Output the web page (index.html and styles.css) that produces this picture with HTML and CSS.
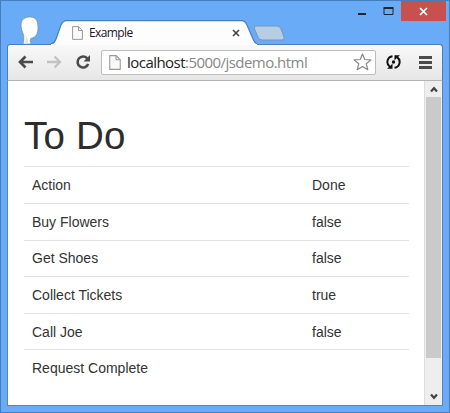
FILE: index.html
```html
<!DOCTYPE html>
<html lang="en">
<head>
<meta charset="utf-8">
<title>Example</title>
<link rel="stylesheet" href="styles.css">
</head>
<body>
<div class="window">
  <header class="titlebar">
    <svg class="avatar" width="20" height="28" viewBox="0 0 20 28"><path d="M3 28C4 24 4.500 20 2.500 16C.5 11 0 4 5 2C9 .3 15 .3 17 5C18.500 10 18.500 17 15.500 20C14 22 11 21.500 10.500 23C10 25 10.500 26 11 28Z" fill="#fff" stroke="#72828d" stroke-width=".6"/><path d="M4 18C7 20 6 24 4 28H7C9 24 8 21 4 18Z" fill="#dce5e9"/></svg>
    <div class="tab">
      <svg class="tab-shape" width="206" height="25" viewBox="0 0 206 25"><path d="M0 24C3 24 4 22 5 19L10 5Q12 1 15 1H191Q194 1 196 5L202 19Q204 24 206 24V25H0Z" fill="#fdfdfd"/><path d="M0 23.500C3 23.500 4 22 5 19L10 5Q12 .7 15 .7H191Q194 .7 196 5L202 19Q204 23.500 206 23.500" fill="none" stroke="#477fbd" stroke-width="1.200"/></svg>
      <svg class="page-icon" width="11" height="14" viewBox="0 0 11 14"><path d="M.6.6H6.500L10.400 4.500V13.400H.6Z" fill="#fafafa" stroke="#999"/><path d="M6.500.6V4.500H10.400" fill="none" stroke="#999"/></svg>
      <span class="tab-title">Example</span>
      <svg class="tab-close" width="8" height="8" viewBox="0 0 8 8"><path d="M1 1L7 7M7 1L1 7" stroke="#444" stroke-width="1.600"/></svg>
    </div>
    <svg class="new-tab" width="32" height="16" viewBox="0 0 32 16"><path d="M3 1H24Q27 1 28 4L31 12Q32 15 29 15H9Q6 15 5 12L1.500 4Q.5 1 3 1Z" fill="#b6cde3" stroke="#6b99ca"/></svg>
    <div class="controls">
      <svg class="minmax" width="40" height="20" viewBox="0 0 40 20"><path d="M4 14H12" stroke="#1d2633" stroke-width="2"/><path d="M30 8.500H39V14.500H30Z" fill="none" stroke="#1d2633"/><path d="M29.500 8H39.500" stroke="#1d2633" stroke-width="2"/></svg>
      <div class="close"><svg width="9" height="9" viewBox="0 0 9 9"><path d="M1 1L8 8M8 1L1 8" stroke="#fff" stroke-width="1.700"/></svg></div>
    </div>
  </header>
  <nav class="toolbar">
    <svg class="back" width="16" height="14" viewBox="0 0 16 14"><path d="M7.500 1.500L2 7L7.500 12.500M2 7H15" fill="none" stroke="#4b4b4b" stroke-width="2.700"/></svg>
    <svg class="forward" width="16" height="14" viewBox="0 0 16 14"><path d="M8.500 1.500L14 7L8.500 12.500M14 7H1" fill="none" stroke="#c2c2c2" stroke-width="2.300"/></svg>
    <svg class="reload" width="16" height="16" viewBox="0 0 16 16"><path d="M12.200 4.300A5.500 5.500 0 1 0 13.200 10" fill="none" stroke="#4b4b4b" stroke-width="2.600"/><path d="M15 1V7.500H8.500Z" fill="#4b4b4b"/></svg>
    <div class="address">
      <svg class="page-icon" width="12" height="15" viewBox="0 0 11 14"><path d="M.6.6H6.500L10.400 4.500V13.400H.6Z" fill="#fafafa" stroke="#999"/><path d="M6.500.6V4.500H10.400" fill="none" stroke="#999"/></svg>
      <span class="url"><b>localhost</b>:5000/jsdemo.html</span>
      <svg class="star" width="19" height="18" viewBox="0 0 19 18"><path d="M9.500 1L11.800 6.500L18 6.900L13.200 10.700L14.800 16.700L9.500 13.400L4.200 16.700L5.800 10.700L1 6.900L7.200 6.500Z" fill="#fff" stroke="#888" stroke-width="1.200" stroke-linejoin="round"/></svg>
    </div>
    <svg class="sync" width="15" height="16" viewBox="0 0 15 16"><g fill="none" stroke="#111" stroke-width="2"><path d="M6.500 2.200A5.800 5.800 0 0 0 4 12.800M8.500 13.800A5.800 5.800 0 0 0 11 3.200"/></g><path d="M1 14.700H6.500V9.500L4.700 11.500ZM14 1.300H8.500V6.500L10.300 4.500Z" fill="#111"/><circle cx="7.500" cy="8" r="1.700" fill="#111"/></svg>
    <svg class="menu" width="13" height="13" viewBox="0 0 13 13"><path d="M0 1.500H13M0 6.500H13M0 11.500H13" stroke="#4b4b4b" stroke-width="2.800"/></svg>
  </nav>
  <div class="viewport">
    <main class="page">
      <h1>To Do</h1>
      <table>
        <tbody>
          <tr><td>Action</td><td>Done</td></tr>
          <tr><td>Buy Flowers</td><td>false</td></tr>
          <tr><td>Get Shoes</td><td>false</td></tr>
          <tr><td>Collect Tickets</td><td>true</td></tr>
          <tr><td>Call Joe</td><td>false</td></tr>
          <tr><td colspan="2">Request Complete</td></tr>
        </tbody>
      </table>
    </main>
    <div class="scrollbar">
      <svg width="8" height="7" viewBox="0 0 8 7"><path d="M1 5.500L4 2.200L7 5.500" fill="none" stroke="#444" stroke-width="2.200"/></svg>
      <div class="thumb"></div>
      <svg class="down" width="8" height="7" viewBox="0 0 8 7"><path d="M1 1.500L4 4.800L7 1.500" fill="none" stroke="#444" stroke-width="2.200"/></svg>
    </div>
  </div>
</div>
</body>
</html>
```

FILE: styles.css
```css
* { box-sizing: border-box; }
body { margin: 0; overflow: hidden; }
svg { display: block; flex: none; }

.window {
  width: 450px;
  height: 413px;
  padding: 0 6px 6px;
  display: flex;
  flex-direction: column;
  background: #6aabf7;
  border: 1px solid #467dbd;
  font-family: "Liberation Sans", Arial, sans-serif;
}

.titlebar {
  height: 43px;
  flex: none;
  display: flex;
  align-items: flex-start;
}
.avatar { margin: 15px 0 0 13px; }
.tab {
  position: relative;
  z-index: 1;
  width: 206px;
  height: 25px;
  margin: 19px 0 0 11px;
  padding: 0 17px 0 21px;
  display: flex;
  align-items: center;
}
.tab-shape { position: absolute; left: 0; top: 0; }
.tab .page-icon { position: relative; }
.tab-title {
  position: relative;
  margin-left: 6px;
  font: 12px/16px "Open Sans", sans-serif;
  letter-spacing: -0.6px;
  color: #24132f;
}
.tab-close { position: relative; margin: 1px 0 0 auto; }
.new-tab { margin: 24px 0 0 -4px; }
.controls { margin-left: auto; display: flex; }
.minmax { margin-right: 7px; margin-top: -1px; }
.close {
  width: 45px;
  height: 20px;
  margin-right: -3px;
  display: flex;
  align-items: center;
  justify-content: center;
  background: #c8504e;
}

.toolbar {
  height: 37px;
  flex: none;
  padding: 0 10px 1px 10px;
  display: flex;
  align-items: center;
  background: linear-gradient(#f9f9f9, #e6e6e6);
  border: 1px solid #477fbd;
  border-bottom-color: #b3b3b3;
  border-radius: 3px 3px 0 0;
}
.forward { margin-left: 12px; }
.reload { margin-left: 13px; }
.address {
  width: 275px;
  height: 25px;
  margin-left: 10px;
  padding: 0 3px 0 7px;
  display: flex;
  align-items: center;
  background: #fff;
  border: 1px solid #bdbdbd;
  border-radius: 2px;
}
.url {
  margin-left: 6px;
  font: 15px/20px "Open Sans", sans-serif;
  letter-spacing: -0.54px;
  white-space: nowrap;
  color: #888;
}
.url b { font-weight: 400; color: #222; }
.star { margin-left: auto; }
.sync { margin-left: 10px; }
.menu { margin-left: auto; }

.viewport {
  flex: 1;
  min-height: 0;
  display: flex;
  background: #fff;
  border: 1px solid #5b83ae;
  border-top: 0;
}
.page { flex: 1; padding: 31px 15px 0 16px; color: #333; }
h1 {
  margin: 0;
  height: 54.4px;
  font-size: 38.5px;
  line-height: 48px;
  font-weight: 400;
  letter-spacing: 0.2px;
  color: #2d2d2d;
}
table { width: 385px; border-collapse: collapse; table-layout: fixed; }
td {
  height: 36.6px;
  padding: 0 8px;
  border-top: 1px solid #e3e3e3;
  font-size: 14px;
  line-height: 20px;
}
td:first-child { width: 280px; }

.scrollbar {
  width: 18px;
  padding: 5px 1px 5px 1px;
  display: flex;
  flex-direction: column;
  align-items: center;
  background: #eee;
  border-left: 1px solid #ddd;
}
.thumb { width: 15px; height: 261px; margin-top: 4px; background: #cacaca; }
.down { margin-top: auto; }
```
